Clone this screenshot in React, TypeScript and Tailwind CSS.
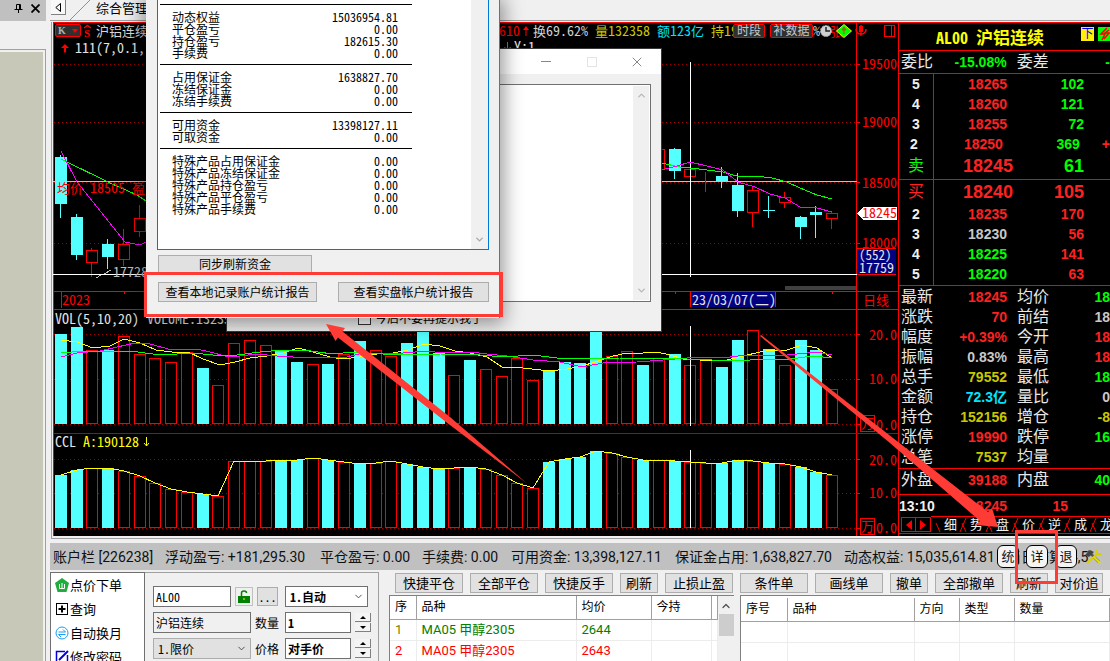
import { ReactNode } from "react";
import { ChevronDown, ChevronUp, X } from "lucide-react";

const PITCH = 15.735;
const barX = (i: number) => Math.round(55 + i * PITCH);

type Bar = [top: number, up: boolean];
const volume: Bar[] = [
  [334, false], [327, false], [350, true], [350, false], [336, true], [354, true], [358, true], [362, true], [352, true], [368, false],
  [385, true], [343, true], [340, true], [345, true], [350, false], [362, false], [364, true], [364, false], [354, true], [341, false],
  [350, true], [356, true], [343, false], [328, false], [353, false], [375, true], [360, false], [369, true], [376, true], [358, true],
  [380, true], [370, false], [362, false], [363, false], [328, false], [356, true], [351, true], [365, false], [358, true], [354, false],
  [365, true], [360, true], [367, false], [340, false], [330, true], [349, false], [365, true], [340, false], [350, false], [389, true],
];
const interest = [
  475, 470, 468, 468, 471, 476, 483, 489, 492, 494, 496, 461, 461, 461, 460, 460, 458, 460, 462, 464, 463, 461, 464, 467, 469, 468, 467,
  469, 475, 483, 488, 462, 459, 457, 451, 453, 457, 460, 460, 461, 462, 463, 463, 460, 461, 463, 464, 467, 472, 475,
];

// index, body top, body bottom, wick top, wick bottom, rising
const candles: [number, number, number, number, number, boolean][] = [
  [0, 157, 204, 155, 218, false], [1, 217, 255, 214, 260, false], [2, 250, 263, 248, 277, true], [3, 244, 257, 239, 269, false],
  [4, 244, 260, 229, 266, true], [5, 218, 232, 205, 237, true], [38, 149, 170, 149, 170, true], [39, 149, 171, 148, 179, false],
  [40, 169, 177, 169, 177, true], [41, 178, 179, 172, 192, true], [42, 176, 181, 167, 188, false], [43, 185, 211, 173, 217, false],
  [44, 190, 213, 187, 227, true], [45, 210, 211, 196, 218, false], [46, 197, 203, 192, 208, true], [47, 217, 227, 216, 239, false],
  [48, 212, 215, 206, 238, false], [49, 213, 219, 211, 229, true],
];

const MONO = "font-['Noto_Sans_Mono_CJK_SC','Liberation_Mono','Noto_Sans_CJK_SC',monospace]";
const UI = "font-['Roboto','Noto_Sans_CJK_SC',sans-serif]";

function Column({ x, top, bottom, up }: { x: number; top: number; bottom: number; up: boolean }) {
  return up ? (
    <rect x={x + 0.5} y={top + 0.5} width={11} height={Math.max(bottom - top - 1, 0)} fill="#000" stroke="#f00" />
  ) : (
    <rect x={x} y={top} width={12} height={bottom - top} fill="#54ffff" />
  );
}

function Chart() {
  const grid = [64, 122, 182, 243, 334, 379, 424, 459, 493, 528];
  return (
    <svg viewBox="53 22 845 514" className={`block w-full bg-black ${MONO}`} role="img" aria-label="沪铝连续 日线">
      <g shapeRendering="crispEdges">
        {grid.map((y) => (
          <line key={y} x1={54} x2={856} y1={y + 0.5} y2={y + 0.5} stroke="#a00000" strokeDasharray="1 3" />
        ))}
        {grid.map((y) => (
          <line key={y} x1={856} x2={860} y1={y + 0.5} y2={y + 0.5} stroke="#f00" />
        ))}
        <path d="M53 22.5H898M53.5 22V536M53 291.5H898M53 309.5H898M856.5 22V536" stroke="#f00" fill="none" />
        <path d="M53 433.5H898" stroke="#c00000" />
        <path d="M61.5 292V308M124.5 292v2M675.5 292v2M832.5 292v2" stroke="#f00" />
        <path d="M53 181.5H857" stroke="#a8c4f0" />
        {candles.map(([i, t, b, wt, wb, up]) => {
          const x = barX(i);
          return (
            <g key={i}>
              <line x1={x + 5.5} x2={x + 5.5} y1={wt} y2={wb} stroke={up ? "#f00" : "#54ffff"} />
              <Column x={x} top={t} bottom={b} up={up} />
            </g>
          );
        })}
        <path d="M690.5 153V160" stroke="#54ffff" />
        {volume.map(([t, up], i) => (
          <Column key={i} x={barX(i)} top={t} bottom={424} up={up} />
        ))}
        {interest.map((t, i) => (
          <Column key={i} x={barX(i)} top={t} bottom={528} up={volume[i][1]} />
        ))}
        <path d="M53 274.5H857M690.5 62V277M690.5 326V426M690.5 450V528" stroke="#fff" />
        <rect x={785} y={286} width={71} height={4} fill="#404040" />
        <g fill="none">
          <path stroke="#0f0" d="M61 159L110 183L137 195L146 201M661 163L680 167L690 168L707 170L723 172L740 177L755 176L772 178L787 182L800 188L817 195L832 199" />
          <path stroke="#f0f" d="M61 151L77 182L125 242L140 245L146 242M661 170L677 166L690 162L707 166L723 170L738 182L755 187L770 194L785 198L800 207L817 208L832 212" />
          <path stroke="#ff0" d="M61 340L77 342L93 348L110 346L124 339L140 343L156 350L172 352L188 352L203 359L220 365L235 362L250 358L267 356L283 353L298 348L313 352L330 357L343 359L360 357L377 354L393 353L408 350L424 344L440 346L455 351L470 353L487 357L502 367L523 368L550 371L567 369L582 366L595 362L613 356L627 353L643 353L657 352L670 355L683 359L700 360L727 360L743 356L760 352L773 350L787 350L802 345L817 348L832 358" />
          <path stroke="#f0f" d="M61 357L77 353L100 351L117 347L135 343L150 344L172 350L197 349L210 352L225 356L240 356L257 354L277 356L293 357L347 357L363 353L403 353L427 351L443 353L470 352L487 354L507 356L533 360L560 362L582 367L603 363L637 362L663 360L687 358L707 357L730 357L747 355L787 355L817 352L832 355" />
          <path stroke="#0f0" d="M61 353L83 351L130 351L153 354L177 354L193 353L223 356L237 355L260 352L283 350L303 350L333 354L353 352L383 354L440 354L480 355L503 357L533 355L557 358L580 359L620 358L657 358L687 359L737 361L763 359L790 359L813 356L832 358" />
          <polyline stroke="#ff0" points={interest.map((t, i) => `${barX(i) + 6},${t}`).join(" ")} />
        </g>
        <rect x={857} y={248} width={39} height={26} fill="#000080" />
        <path d="M857 248.5H896M857 274.5H896" stroke="#f00" />
        <rect x={691} y={292} width={84} height={15} fill="#000080" />
        <path d="M775.5 292V307M690.5 292V307" stroke="#f00" />
        <path d="M857 214L863 207H897V220H863Z" fill="#fff" />
        <path d="M860.5 415.5h14v16h-14zM860.5 518.5h14v16h-14zM884.5 25.5h10v11h-10zM891.5 25V37" fill="none" stroke="#f00" />
        <path d="M96 278l5-3M104 274l7-4" stroke="#c0c0c0" />
      </g>
      <g className="fill-[#ff0000] text-[14px]">
        <text x={862} y={69}>19500</text>
        <text x={862} y={127}>19000</text>
        <text x={862} y={188}>18500</text>
        <text x={862} y={248}>18000</text>
        <text x={862} y={218}>18245</text>
        <text x={869} y={340}>20.0</text>
        <text x={869} y={384}>10.0</text>
        <text x={876} y={430}>0.0</text>
        <text x={869} y={465}>20.0</text>
        <text x={869} y={498}>10.0</text>
        <text x={876} y={533}>0.0</text>
        <text x={62} y={305}>2023</text>
        <text x={90} y={193}>18505</text>
        <text x={499} y={36}>610</text>
      </g>
      <g className="fill-[#ff0000] text-[13px]">
        <text x={57} y={193}>均价</text>
        <text x={132} y={193}>盈</text>
        <text x={863} y={305}>日线</text>
        <text x={861} y={428}>万</text>
        <text x={861} y={531}>万</text>
        <text x={830} y={36}>张</text>
      </g>
      <path d="M526 26l3 4h-2.500v6h-1v-6h-2.500z" fill="#f00" />
      <g className="fill-[#e4e4e4] text-[14px]">
        <text x={859} y={260} className="text-[13px]">(552)</text>
        <text x={859} y={273}>17759</text>
        <text x={692} y={305}>23/03/07(二)</text>
        <text x={75} y={53}>111(7,0.1,</text>
        <text x={55} y={324}>VOL(5,10,20)</text>
        <text x={147} y={324}>VOLUME:132358</text>
        <text x={55} y={447}>CCL</text>
        <text x={514} y={52}>Y:1</text>
      </g>
      <text x={83} y={447} className="fill-[#ffff00] text-[14px]">A:190128</text>
      <path d="M146.500 437v9m-2.500-3l2.500 3l2.500-3" stroke="#ff0" fill="none" />
      <path d="M507.500 42v8m-3-3l3 4l3-4" stroke="#0c0" fill="none" />
      <text x={113} y={277} className="fill-[#c0c0c0] text-[14px]">17728</text>
      <text x={96} y={36} className="fill-[#d8d8d8] text-[13px]">沪铝连续</text>
      <g className="text-[14px]">
        <text x={533} y={36} className="fill-[#d0d0d0]"><tspan className="text-[13px]">换</tspan>69.62%</text>
        <text x={595} y={36} className="fill-[#c8c800]"><tspan className="text-[13px]">量</tspan>132358</text>
        <text x={657} y={36} className="fill-[#00e5ff]"><tspan className="text-[13px]">额</tspan>123<tspan className="text-[13px]">亿</tspan></text>
        <text x={711} y={36} className="fill-[#c8c800]"><tspan className="text-[13px]">持</tspan>19</text>
        <text x={813} y={36} className="fill-[#d0d0d0]">%</text>
      </g>
      <circle cx={826} cy={31} r={5.500} fill="#d0d0d0" stroke="#aaa" strokeDasharray="2 1" />
      <path d="M826 27v4h4" stroke="#222" strokeWidth={1.500} fill="none" />
      <path d="M836.500 31L844 24.500L851.500 31L844 37.500Z" fill="#0f0" stroke="#dfff00" />
      <path d="M844 28v6m-2-4l2-3l2 3z" stroke="#a06000" fill="#a06000" />
      <path d="M859 26h4v6h-4z" fill="#f00" />
      <path d="M861 25v11M856 29q0 5 5 5t5-5" stroke="#f00" strokeWidth={1.500} fill="none" />
      <path d="M65 44l4 4h-3v4.500h-2V48h-3z" fill="#f00" />
      <path d="M84 28l3.500-2.500l3.500 2.500" stroke="#f00" strokeWidth={1.500} fill="none" />
      <text x={84} y={37} className="fill-[#ff0000] font-['Liberation_Serif'] text-[11px] font-bold">S</text>
    </svg>
  );
}

type Tone = "r" | "g" | "w" | "y" | "c";
const tones: Record<Tone, string> = {
  r: "text-[#ff2020]",
  g: "text-[#00ff00]",
  w: "text-[#c8c8c8]",
  y: "text-[#c8c800]",
  c: "text-[#00e5ff]",
};

function DepthRow({ tag, price, qty, tone, qtyTone, mark }: { tag: string; price: string; qty: string; tone: Tone; qtyTone: Tone; mark?: string }) {
  return (
    <div className="flex h-5 shrink-0 items-center font-bold">
      <span className="w-[34px] text-center text-[#f0f0f0]">{tag}</span>
      <span className={`w-[74px] shrink-0 text-right ${tones[tone]}`}>{price}</span>
      <span className={`w-[77px] shrink-0 text-right ${tones[qtyTone]}`}>{qty}</span>
      <span className="ml-[22px] text-[#ff2020]">{mark}</span>
    </div>
  );
}

function BestRow({ tag, price, qty, tone }: { tag: string; price: string; qty: string; tone: Tone }) {
  return (
    <div className="flex h-6 shrink-0 items-center text-lg leading-5 font-bold">
      <span className={`w-[34px] text-center text-base leading-5 font-normal ${tones[tone]}`}>{tag}</span>
      <span className="w-[80px] text-right text-[#ff2020]">{price}</span>
      <span className={`w-[71px] text-right ${tones[tone]}`}>{qty}</span>
    </div>
  );
}

type Stat = [string, string, Tone, string, string, Tone];
const stats: Stat[] = [
  ["最新", "18245", "r", "均价", "18", "g"],
  ["涨跌", "70", "r", "前结", "18", "w"],
  ["幅度", "+0.39%", "r", "今开", "18", "r"],
  ["振幅", "0.83%", "w", "最高", "18", "r"],
  ["总手", "79552", "y", "最低", "18", "g"],
  ["金额", "72.3亿", "c", "量比", "0", "w"],
  ["持仓", "152156", "y", "增仓", "-8", "y"],
  ["涨停", "19990", "r", "跌停", "16", "g"],
  ["总笔", "7537", "y", "均量", "", "w"],
];

function StatRow({ row }: { row: Stat }) {
  const [a, av, at, b, bv, bt] = row;
  return (
    <div className="flex h-5 items-center whitespace-nowrap font-bold">
      <span className="w-10 pl-0.5 text-base font-normal text-[#e8e8e8]">{a}</span>
      <span className={`w-[68px] text-right ${tones[at]}`}>{av}</span>
      <span className="w-10 pl-2.5 text-base font-normal text-[#e8e8e8]">{b}</span>
      <span className={`w-[63px] text-right ${tones[bt]}`}>{bv}</span>
    </div>
  );
}

function Quote() {
  const line = "border-t border-[#ff0000]";
  return (
    <aside className="flex w-[212px] shrink-0 flex-col overflow-hidden border-l border-[#ff0000] bg-black font-['Liberation_Sans','Noto_Sans_CJK_SC',sans-serif] text-sm leading-5">
      <header className={`flex h-7 items-center pl-[37px] font-bold text-[#ffff00] ${line}`}>
        <h2 className={`w-[145px] shrink-0 whitespace-nowrap text-base ${MONO}`}>
          AL00 <span className="text-[17px]">沪铝连续</span>
        </h2>
        <button className="mb-1.5 h-3.5 w-[13px] shrink-0 bg-[#fff000] text-[12px] leading-3.5 font-normal text-[#0000ff]">下</button>
        <button aria-label="闪电下单" className="mb-1.5 ml-1 h-3.5 w-3.5 shrink-0 bg-[#00ff00]">
          <svg viewBox="0 0 14 14" className="size-3.5"><path d="M9 1L3 7h4L4 13M11 3L7 6h4L6 12" stroke="#f00" strokeWidth={1.500} fill="none" /></svg>
        </button>
      </header>
      <div className={`flex h-[23px] items-center ${line} text-base text-[#e8e8e8]`}>
        <span className="w-10 pl-0.5">委比</span>
        <span className="w-[68px] text-right text-sm font-bold text-[#00ff00]">-15.08%</span>
        <span className="w-[99px] pl-2.5">委差</span>
        <span className="text-sm font-bold text-[#00ff00]">-</span>
      </div>
      <div className={`relative flex h-[106px] flex-col ${line}`}>
        <DepthRow tag="5" price="18265" qty="102" tone="r" qtyTone="g" />
        <DepthRow tag="4" price="18260" qty="121" tone="r" qtyTone="g" />
        <DepthRow tag="3" price="18255" qty="72" tone="r" qtyTone="g" />
        <DepthRow tag="2" price="18250" qty="369" tone="r" qtyTone="g" mark="+" />
        <BestRow tag="卖" price="18245" qty="61" tone="g" />
        <div className="absolute inset-y-0 left-[34px] w-px bg-[#ff0000]" />
      </div>
      <div className={`relative flex h-[106px] flex-col ${line}`}>
        <BestRow tag="买" price="18240" qty="105" tone="r" />
        <DepthRow tag="2" price="18235" qty="170" tone="r" qtyTone="r" />
        <DepthRow tag="3" price="18230" qty="56" tone="w" qtyTone="r" />
        <DepthRow tag="4" price="18225" qty="141" tone="g" qtyTone="r" />
        <DepthRow tag="5" price="18220" qty="63" tone="g" qtyTone="r" />
        <div className="absolute inset-y-0 left-[34px] w-px bg-[#ff0000]" />
      </div>
      <div className={`h-[183px] pt-px ${line}`}>
        {stats.map((s) => <StatRow key={s[0]} row={s} />)}
      </div>
      <div className={`h-[26px] pt-px ${line}`}>
        <StatRow row={["外盘", "39188", "r", "内盘", "40", "g"]} />
      </div>
      <div className={`flex h-[22px] items-center font-bold ${line}`}>
        <span className="w-[38px] text-[#f0f0f0]">13:10</span>
        <span className="w-[70px] text-right text-[#ff2020]">18245</span>
        <span className="w-[61px] text-right text-[#ff2020]">15</span>
      </div>
      <nav className="flex h-[18px] items-center border-b border-[#ff0000] pl-0.5">
        <button aria-label="上一页" className="flex h-[15px] w-[15px] shrink-0 items-center justify-center border border-[#ff0000]">
          <svg viewBox="0 0 8 10" className="h-2.5 w-2"><path d="M7 0V10L1 5Z" fill="#f00" /></svg>
        </button>
        <button aria-label="下一页" className="flex h-[15px] w-[15px] shrink-0 items-center justify-center border border-l-0 border-[#ff0000]">
          <svg viewBox="0 0 8 10" className="h-2.5 w-2"><path d="M1 0V10L7 5Z" fill="#f00" /></svg>
        </button>
        {["细", "势", "盘", "价", "逆", "成", "龙"].map((t, i) => (
          <button key={t} className="flex w-[26px] shrink-0 items-center justify-end gap-px border-t border-[#ff0000] text-[13px] leading-4 text-[#f0f0f0]">
            <svg viewBox="0 0 10 15" className="h-[15px] w-2.5" fill="none" stroke="#f00">
              <path d={i ? "M1 14L7 0M3 5L7 14" : "M3 5L7 14"} />
            </svg>
            {t}
          </button>
        ))}
      </nav>
    </aside>
  );
}

const grayButton = "border border-[#adadad] bg-[#e1e1e1] text-black";

function FundsWindow() {
  const groups: [string, string][][] = [
    [["动态权益", "15036954.81"], ["平仓盈亏", "0.00"], ["持仓盈亏", "182615.30"], ["手续费", "0.00"]],
    [["占用保证金", "1638827.70"], ["冻结保证金", "0.00"], ["冻结手续费", "0.00"]],
    [["可用资金", "13398127.11"], ["可取资金", "0.00"]],
    [["特殊产品占用保证金", "0.00"], ["特殊产品冻结保证金", "0.00"], ["特殊产品持仓盈亏", "0.00"], ["特殊产品平仓盈亏", "0.00"], ["特殊产品手续费", "0.00"]],
  ];
  return (
    <section className={`absolute left-[146px] top-0 w-[354px] border-r border-[#707070] bg-[#f0f0f0] pb-4 pl-[11px] text-[12px] leading-3 text-black shadow-[0_2px_18px_4px_rgba(0,0,0,0.4)] ${MONO}`}>
      <div className="flex h-[250px] w-[332px] border border-t-0 border-[#0078d7] bg-white">
        <div className="w-[313px] pl-0.5 pt-1">
          {groups.map((g, i) => (
            <dl key={i} className="w-[252px] border-t border-black py-[5px] pl-3 pr-3.5">
              {g.map(([k, v], j) => (
                <div key={k} className={`flex justify-between ${j === 0 ? "pt-px" : ""}`}><dt>{k}</dt><dd>{v}</dd></div>
              ))}
            </dl>
          ))}
        </div>
        <div className="flex w-[17px] flex-col items-center justify-end bg-[#f0f0f0] pb-1 text-[#a8a8a8]"><ChevronDown size={11} strokeWidth={3} /></div>
      </div>
      <div className="pl-px pt-[5px]">
        <button className={`h-[18px] w-[154px] ${grayButton}`}>同步刷新资金</button>
      </div>
      <div className="flex gap-[21px] pl-px pt-[9px]">
        <button className={`h-5 w-[159px] ${grayButton}`}>查看本地记录账户统计报告</button>
        <button className={`h-5 w-[151px] ${grayButton}`}>查看实盘帐户统计报告</button>
      </div>
    </section>
  );
}

function NoticeWindow() {
  return (
    <section className="absolute left-[226px] top-12 flex h-[284px] w-[436px] flex-col border border-[#383838] bg-[#f0f0f0] text-[12px] text-black">
      <header className="flex h-[25px] items-center justify-end gap-8 bg-white pr-4 text-[#888888]">
        <button aria-label="最小化" className="flex w-4 justify-center"><span className="h-px w-2.5 bg-[#888888]" /></button>
        <button aria-label="最大化" className="ml-px size-2.5 border border-[#e4e4e4]" />
        <button aria-label="关闭" className="flex size-4 items-center justify-center"><X size={16} strokeWidth={1.500} className="shrink-0" /></button>
      </header>
      <div className="mx-2.5 mt-2.5 flex h-[218px] justify-end border border-[#707070] bg-white">
        <div className="my-px mr-px flex w-4 flex-col items-center justify-between bg-[#f0f0f0] py-1 text-[#b8b8b8]">
          <ChevronUp size={11} strokeWidth={3} />
          <ChevronDown size={11} strokeWidth={3} />
        </div>
      </div>
      <label className="ml-[131px] mt-1.5 flex items-center gap-1 font-['Noto_Sans_CJK_SC',sans-serif]">
        <input type="checkbox" className="size-[13px] appearance-none border border-[#333333] bg-white" />
        今后不要再提示我了
      </label>
    </section>
  );
}

function AccountBar() {
  const item = "shrink-0 whitespace-nowrap";
  const round = "h-[23px] w-[22px] rounded-md border border-black bg-[#f4f4f4] text-[13px] leading-5";
  return (
    <div className={`relative flex h-[27px] items-center bg-[#c0c0c0] pl-[3px] text-[#101010] ${UI}`}>
      <span className={`w-28 ${item}`}>账户栏 [226238]</span>
      <span className={`w-[155px] ${item}`}>浮动盈亏: +181,295.30</span>
      <span className={`w-[102px] ${item}`}>平仓盈亏: 0.00</span>
      <span className={`w-[89px] ${item}`}>手续费: 0.00</span>
      <span className={`w-[164px] ${item}`}>可用资金: 13,398,127.11</span>
      <span className={`w-[169px] ${item}`}>保证金占用: 1,638,827.70</span>
      <span className={`w-[163px] ${item}`}>动态权益: 15,035,614.81</span>
      <span className={item}>当日结算: 4,5</span>
      <div className="absolute right-2 flex items-center gap-[7px]">
        <button className={round}>统</button>
        <button className={round}>详</button>
        <button className={round}>退</button>
        <button aria-label="工具">
          <svg viewBox="0 0 18 18" className="size-[18px]" fill="none">
            <path d="M4 3L15 14" stroke="#555" strokeWidth={2.500} />
            <path d="M1 7L6 2l4 2-5 5z" fill="#444" />
            <path d="M3 15L14 5m-2-3l1 4 4 0" stroke="#d8d000" strokeWidth={2} />
            <path d="M10 9l6 6" stroke="#e8e000" strokeWidth={2} />
          </svg>
        </button>
      </div>
    </div>
  );
}

function MenuItem({ icon, children }: { icon: ReactNode; children: ReactNode }) {
  return (
    <button className="flex h-6 shrink-0 items-center gap-px whitespace-nowrap">
      <svg viewBox="0 0 14 14" className="size-3.5 shrink-0" fill="none">{icon}</svg>
      {children}
    </button>
  );
}

function SideMenu() {
  return (
    <nav className="flex w-[95px] shrink-0 flex-col border border-b-0 border-[#707070] bg-white pl-1 text-[13px]">
      <MenuItem icon={<><path d="M7 0L14 5L11.500 14H2.500L0 5Z" fill="#1fae3c" /><path d="M4.500 6v4.500h5V6M7 5v5" stroke="#fff" /></>}>点价下单</MenuItem>
      <MenuItem icon={<><rect x={1.500} y={1.500} width={11} height={11} stroke="#000" /><path d="M7 3.500v7M3.500 7h7" stroke="#000" strokeWidth={2} /></>}>查询</MenuItem>
      <MenuItem icon={<><circle cx={7} cy={7} r={6} stroke="#1c9cf0" /><path d="M3.500 6h7L8 3.500M10.500 8.500h-7L6 11" stroke="#1c9cf0" /></>}>自动换月</MenuItem>
      <MenuItem icon={<><path d="M10 1.500H1.500v11h11V5" stroke="#0000e0" strokeWidth={1.500} /><path d="M4 10L13 1" stroke="#0000e0" strokeWidth={2} /></>}>修改密码</MenuItem>
    </nav>
  );
}

function Spinner() {
  const b = "flex h-[9px] items-center justify-center border-b border-r border-[#808080] bg-[#f4f4f4]";
  return (
    <div className="ml-1 flex w-4 flex-col gap-px">
      <button type="button" aria-label="增加" className={b}><svg viewBox="0 0 6 3" className="h-[3px] w-1.5"><path d="M0 3L3 0L6 3Z" /></svg></button>
      <button type="button" aria-label="减少" className={b}><svg viewBox="0 0 6 3" className="h-[3px] w-1.5"><path d="M0 0L3 3L6 0Z" /></svg></button>
    </div>
  );
}

function Picker({ label, value, className }: { label: string; value: string; className: string }) {
  return (
    <div className="relative">
      <select aria-label={label} className={`block h-[21px] appearance-none border pl-1 ${className}`}>
        <option>{value}</option>
      </select>
      <ChevronDown size={11} className="pointer-events-none absolute right-1 top-[5px] text-[#444444]" />
    </div>
  );
}

function OrderForm() {
  const box = "h-[21px] border border-[#707070] pl-0.5";
  return (
    <form className={`flex w-[234px] shrink-0 flex-col gap-[5px] border-r border-t border-[#a0a0a0] pl-2 pt-[13px] text-[12px] ${MONO}`}>
      <div className="flex items-center">
        <input aria-label="合约" defaultValue="AL00" className={`w-[78px] bg-white ${box}`} />
        <button type="button" aria-label="锁定" className="ml-1 flex h-[19px] w-[18px] items-center justify-center border border-[#c0c0c0]">
          <svg viewBox="0 0 12 14" className="h-3.5 w-3"><path d="M3.500 6V3q0-2 2.500-2t2.500 2" stroke="#008000" strokeWidth={1.500} fill="none" /><path d="M0 6h12v7H0z" fill="#008000" /><path d="M5.500 8v2h1V8z" fill="#ff0" /></svg>
        </button>
        <button type="button" aria-label="更多" className={`ml-1 h-[19px] w-[21px] leading-3 ${grayButton}`}>...</button>
        <div className="ml-[7px]"><Picker label="方式" value="1.自动" className="w-[83px] border-[#707070] bg-white font-bold" /></div>
      </div>
      <div className="flex items-center">
        <input aria-label="合约名称" defaultValue="沪铝连续" className={`w-[98px] bg-[#f0f0f0] ${box}`} />
        <label htmlFor="qty" className="w-[34px] pl-1">数量</label>
        <input id="qty" defaultValue="1" className={`w-[66px] bg-white font-bold ${box}`} />
        <Spinner />
      </div>
      <div className="flex items-center">
        <Picker label="价格类型" value="1.限价" className="w-[98px] border-[#adadad] bg-[#e1e1e1]" />
        <label htmlFor="price" className="w-[34px] pl-1">价格</label>
        <input id="price" defaultValue="对手价" className={`w-[66px] bg-white font-bold ${box}`} />
        <Spinner />
      </div>
    </form>
  );
}

function ActionButton({ size = "md", children }: { size?: "sm" | "md" | "lg"; children: ReactNode }) {
  const w = size === "md" ? "w-[68px]" : size === "sm" ? "w-[38px]" : "w-12";
  return <button className={`h-5 shrink-0 whitespace-nowrap text-[13px] leading-4 ${w} ${grayButton}`}>{children}</button>;
}

function Positions() {
  const th = "border-r border-b border-b-[#a0a0a0] border-r-[#a0a0a0] pl-[5px] text-left text-[12px] font-normal";
  const td = "border-r border-b border-[#ececec] pl-[5px]";
  return (
    <section className="flex w-[345px] shrink-0 flex-col">
      <div className="flex gap-[7px] pb-0.5 pl-1.5">
        <ActionButton>快捷平仓</ActionButton>
        <ActionButton>全部平仓</ActionButton>
        <ActionButton>快捷反手</ActionButton>
        <ActionButton size="sm">刷新</ActionButton>
        <ActionButton>止损止盈</ActionButton>
      </div>
      <div className="flex flex-1 border-l border-t border-[#808080] bg-white">
        <div className="flex-1">
          <table className={`w-full table-fixed border-collapse text-[13px] leading-5 ${UI}`}>
            <colgroup><col className="w-[26px]" /><col className="w-[160px]" /><col className="w-[75px]" /><col className="w-[60px]" /><col /></colgroup>
            <thead>
              <tr className="h-[23px]"><th className={th}>序</th><th className={th}>品种</th><th className={th}>均价</th><th className={th}>今持</th><th className={th} /></tr>
            </thead>
            <tbody>
              <tr className="h-[21px] text-[#008000]"><td className={`text-[#808000] ${td}`}>1</td><td className={td}>MA05 甲醇2305</td><td className={td}>2644</td><td className={td} /><td className={td} /></tr>
              <tr className="h-[21px] text-[#ff0000]"><td className={td}>2</td><td className={td}>MA05 甲醇2305</td><td className={td}>2643</td><td className={td} /><td className={td} /></tr>
            </tbody>
          </table>
        </div>
        <div className="flex w-4 flex-col items-center gap-0.5 bg-[#f0f0f0] pt-1">
          <ChevronUp size={12} strokeWidth={2.500} className="shrink-0 text-[#505050]" />
          <span className="h-[22px] w-[15px] shrink-0 bg-[#cdcdcd]" />
        </div>
      </div>
    </section>
  );
}

function Orders() {
  const th = "border-r border-b border-b-[#a0a0a0] border-r-[#a0a0a0] pl-[5px] text-left font-normal whitespace-nowrap";
  const td = "border-r border-b border-[#ececec]";
  return (
    <section className="ml-1.5 flex min-w-0 flex-1 flex-col">
      <div className="flex gap-[7px] pb-0.5">
        <ActionButton>条件单</ActionButton>
        <ActionButton>画线单</ActionButton>
        <ActionButton size="sm">撤单</ActionButton>
        <ActionButton>全部撤单</ActionButton>
        <ActionButton size="sm">刷新</ActionButton>
        <ActionButton size="lg">对价追</ActionButton>
      </div>
      <div className="flex-1 border-l border-t border-[#808080] bg-white pt-0.5">
        <table className={`w-full table-fixed border-collapse text-[12px] leading-5 ${UI}`}>
          <colgroup><col className="w-[46px]" /><col className="w-[127px]" /><col className="w-[45px]" /><col className="w-[55px]" /><col /></colgroup>
          <thead><tr className="h-[23px]">{["序号", "品种", "方向", "类型", "数量"].map((h) => <th key={h} className={th}>{h}</th>)}</tr></thead>
          <tbody>
            {[0, 1].map((r) => (
              <tr key={r} className="h-[21px]">{[0, 1, 2, 3, 4].map((c) => <td key={c} className={td} />)}</tr>
            ))}
          </tbody>
        </table>
      </div>
    </section>
  );
}

function Annotations() {
  return (
    <svg className="pointer-events-none absolute inset-0 size-full" fill="none">
      <rect x={145.500} y={273.500} width={356} height={42} stroke="#ff3b35" strokeWidth={3} />
      <rect x={1016.500} y={531.500} width={40} height={51} stroke="#ff3b35" strokeWidth={3} />
      <path d="M326 324L345 328L342.500 331.500L450 417L527 483.500L446 422L338 337.500L335.500 341Z" fill="#ff3b35" />
      <path d="M998 527L992 508L988 512L893 438L761 335L760 336L890 443L980 521L976 525Z" fill="#ff3b35" />
    </svg>
  );
}

export default function App() {
  return (
    <div className="relative flex h-screen overflow-hidden bg-[#f0f0f0] font-['Open_Sans','Noto_Sans_CJK_SC',sans-serif] text-sm leading-5 text-black">
      <aside className="flex w-[50px] shrink-0 flex-col">
        <div className="mr-1 flex h-[21px] items-center justify-end gap-2 bg-[#c0c0c0] pb-1 pr-1.5">
          <button aria-label="固定"><svg viewBox="0 0 9 9" className="size-[9px]" fill="none" stroke="#000"><path d="M2.500 5V.5h4V5M5.500 0v5M.5 5.500h8M4.500 6v3" /></svg></button>
          <button aria-label="关闭侧栏"><svg viewBox="0 0 9 9" className="size-[9px]"><path d="M.5.5l8 8M8.500.5l-8 8" stroke="#000" strokeWidth={1.800} /></svg></button>
        </div>
        <div className="mr-1 mt-7 flex-1 border-r border-t border-[#a0a0a0] pr-0.5 pt-0.5">
          <div className="h-full bg-[#c8c8b8]" />
        </div>
      </aside>
      <main className="flex min-w-0 flex-1 flex-col">
        <header className="mb-px flex h-[21px] shrink-0 items-start border-b border-[#a0a0a0] pl-px">
          <button aria-label="向左滚动" className="flex h-[15px] w-[15px] items-center justify-center border-b border-r border-[#808080] bg-[#f8f8f8]">
            <svg viewBox="0 0 6 9" className="h-[9px] w-1.5" fill="none" stroke="#000"><path d="M5.500.5v8L.8 4.500Z" /></svg>
          </button>
          <svg viewBox="0 0 22 20" className="ml-1 h-5 w-[22px]"><path d="M0 20L20 0" stroke="#909090" /></svg>
          <button className="ml-1 text-[13px] leading-4">综合管理</button>
        </header>
        <div className="ml-px flex items-stretch border-b border-l border-[#a0a0a0] pb-0.5 pl-px">
          <div className="relative min-w-0 flex-1">
            <Chart />
            <button className="absolute left-0.5 top-0.5 flex h-[13px] w-[26px] items-center justify-center gap-1.5 rounded-xs border border-[#ff0000] bg-[#303030] font-['Liberation_Serif'] text-[10px] font-bold text-[#b0b0b0]">
              K<svg viewBox="0 0 6 4" className="h-1 w-1.5"><path d="M0 0H6L3 4Z" fill="#f00" /></svg>
            </button>
            <div className="absolute right-[85px] top-0.5 flex gap-[5px] text-[12px] leading-3 text-[#c0c8d0]">
              <button className="h-3.5 w-8 rounded-xs border border-[#ff0000] bg-[#303030]">时段</button>
              <button className="h-3.5 w-[43px] rounded-xs border border-[#ff0000] bg-[#303030]">补数据</button>
            </div>
          </div>
          <Quote />
        </div>
        <div className="mt-1 shrink-0"><AccountBar /></div>
        <div className="flex min-h-0 flex-1 pt-0.5">
          <SideMenu />
          <OrderForm />
          <div className="ml-2.5 flex min-w-0 flex-1 pt-px"><Positions /><Orders /></div>
        </div>
      </main>
      <NoticeWindow />
      <FundsWindow />
      <Annotations />
    </div>
  );
}
